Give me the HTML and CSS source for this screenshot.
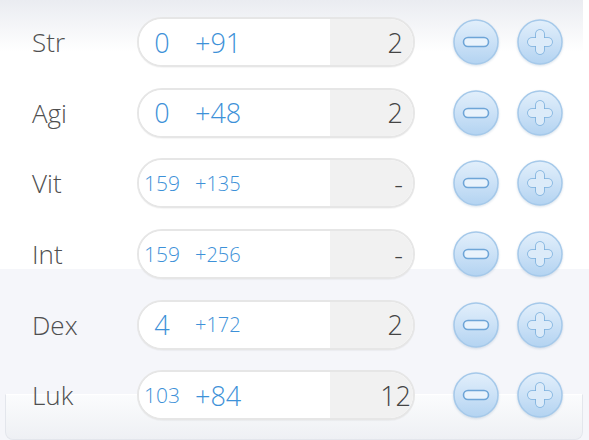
FILE: index.html
```html
<!DOCTYPE html>
<html lang="en">
<head>
  <meta charset="UTF-8" />
  <meta name="viewport" content="width=device-width, initial-scale=1.0" />
  <title>Stats</title>
  <link rel="stylesheet" href="styles.css">
</head>
<body>

  <!-- button icons -->
  <svg class="defs" width="0" height="0">
    <defs>
      <linearGradient id="btn-bg" x1="0" y1="0" x2="0" y2="1">
        <stop offset="0" stop-color="#e2effb"/>
        <stop offset="0.55" stop-color="#c9e0f6"/>
        <stop offset="1" stop-color="#b3d3f1"/>
      </linearGradient>
      <symbol id="btn-minus" viewBox="0 0 46 46">
        <circle cx="23" cy="23" r="22" fill="url(#btn-bg)" stroke="#a5c9ea" stroke-width="1.5"/>
        <rect x="10.5" y="18.5" width="25" height="9" rx="4.5" fill="#e9f3fc" stroke="#6ea5d7" stroke-width="1.6"/>
      </symbol>
      <symbol id="btn-plus" viewBox="0 0 46 46">
        <circle cx="23" cy="23" r="22" fill="url(#btn-bg)" stroke="#a5c9ea" stroke-width="1.5"/>
        <rect x="11" y="19" width="24" height="8" rx="4" fill="none" stroke="#7aafdd" stroke-width="1.6"/>
        <rect x="19" y="11" width="8" height="24" rx="4" fill="none" stroke="#7aafdd" stroke-width="1.6"/>
        <rect x="11" y="19" width="24" height="8" rx="4" fill="#dcebf9"/>
        <rect x="19" y="11" width="8" height="24" rx="4" fill="#dcebf9"/>
      </symbol>
    </defs>
  </svg>

  <div class="stats">
    <div class="row">
      <span class="label">Str</span>
      <div class="pill">
        <div class="pill-left"><span class="base">0</span><span class="bonus">+91</span></div>
        <div class="pill-right">2</div>
      </div>
      <div class="btns">
        <svg class="btn"><use href="#btn-minus"/></svg>
        <svg class="btn"><use href="#btn-plus"/></svg>
      </div>
    </div>

    <div class="row">
      <span class="label">Agi</span>
      <div class="pill">
        <div class="pill-left"><span class="base">0</span><span class="bonus">+48</span></div>
        <div class="pill-right">2</div>
      </div>
      <div class="btns">
        <svg class="btn"><use href="#btn-minus"/></svg>
        <svg class="btn"><use href="#btn-plus"/></svg>
      </div>
    </div>

    <div class="row">
      <span class="label">Vit</span>
      <div class="pill">
        <div class="pill-left"><span class="base small">159</span><span class="bonus small">+135</span></div>
        <div class="pill-right">-</div>
      </div>
      <div class="btns">
        <svg class="btn"><use href="#btn-minus"/></svg>
        <svg class="btn"><use href="#btn-plus"/></svg>
      </div>
    </div>

    <div class="row">
      <span class="label">Int</span>
      <div class="pill">
        <div class="pill-left"><span class="base small">159</span><span class="bonus small">+256</span></div>
        <div class="pill-right">-</div>
      </div>
      <div class="btns">
        <svg class="btn"><use href="#btn-minus"/></svg>
        <svg class="btn"><use href="#btn-plus"/></svg>
      </div>
    </div>

    <div class="row">
      <span class="label">Dex</span>
      <div class="pill">
        <div class="pill-left"><span class="base">4</span><span class="bonus small">+172</span></div>
        <div class="pill-right">2</div>
      </div>
      <div class="btns">
        <svg class="btn"><use href="#btn-minus"/></svg>
        <svg class="btn"><use href="#btn-plus"/></svg>
      </div>
    </div>

    <div class="row row-last">
      <span class="label">Luk</span>
      <div class="pill">
        <div class="pill-left"><span class="base small">103</span><span class="bonus">+84</span></div>
        <div class="pill-right wide">12</div>
      </div>
      <div class="btns">
        <svg class="btn"><use href="#btn-minus"/></svg>
        <svg class="btn"><use href="#btn-plus"/></svg>
      </div>
    </div>
  </div>

</body>
</html>
```

FILE: styles.css
```css
body {
  margin: 0;
  padding: 0;
  width: 589px;
  height: 440px;
  overflow: hidden;
  font-family: 'Open Sans', Lato, sans-serif;
  font-weight: 300;
  color: #555;
  background:
    linear-gradient(to bottom, #eaecf1, #ffffff) 0 0 / 583px 52px no-repeat,
    linear-gradient(to bottom, #ffffff 0px, #ffffff 269px, #f5f6fa 269px, #f5f6fa 100%);
}

.defs {
  position: absolute;
}

.stats {
  padding-top: 7px;
}

.row {
  position: relative;
  display: grid;
  grid-template-columns: 105px 278px 1fr;
  align-items: center;
  height: 70.6px;
  padding-left: 32px;
}

.label {
  font-size: 26px;
  color: #4f4f4f;
}

.pill {
  display: flex;
  height: 50px;
  box-sizing: border-box;
  border: 2px solid #e6e6e6;
  border-radius: 25px;
  overflow: hidden;
  background: #fff;
  box-shadow: 0 1px 1px rgba(0,0,0,0.04);
}

.pill-left {
  width: 191px;
  display: flex;
  align-items: center;
  background: #fff;
  color: #3d91d8;
}

.base {
  width: 46px;
  text-align: center;
  font-size: 27px;
}

.bonus {
  margin-left: 10px;
  font-size: 27px;
}

.base.small {
  font-size: 21px;
}

.bonus.small {
  font-size: 20px;
}

.pill-right {
  flex: 1;
  display: flex;
  align-items: center;
  justify-content: flex-end;
  padding-right: 10px;
  background: #f1f1f1;
  font-size: 27px;
  color: #444;
}

.pill-right.wide {
  padding-right: 2px;
}

.btns {
  display: flex;
  gap: 18px;
  margin-left: 38px;
}

.btn {
  width: 46px;
  height: 46px;
  filter: drop-shadow(0 1px 1px rgba(90,130,170,0.25));
}

/* bottom panel behind the last row */
.row-last::before {
  content: '';
  position: absolute;
  left: 5px;
  right: 6px;
  top: 34px;
  height: 44px;
  border: 1px solid #e3e6ec;
  border-top-color: #fff;
  border-radius: 0 0 8px 8px;
  background: linear-gradient(to bottom, #fbfcfd, #eef0f4);
  z-index: -1;
}

.row-last > * {
  position: relative;
}
```
